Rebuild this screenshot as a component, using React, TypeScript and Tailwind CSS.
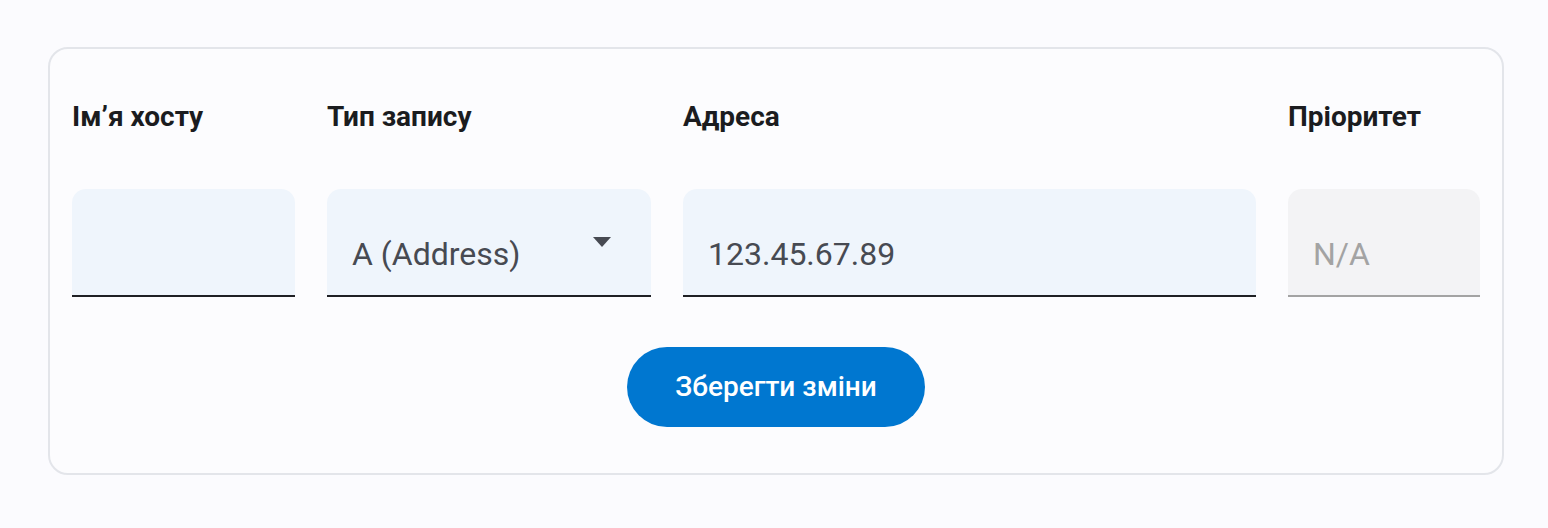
import React from "react";

const font = { fontFamily: "Roboto, 'Noto Sans', sans-serif" };

interface Field {
  label: string;
  width: string;
  value?: string;
  kind: "text" | "select" | "disabled";
}

const fields: Field[] = [
  { label: "Ім’я хосту", width: "w-[223px]", kind: "text" },
  { label: "Тип запису", width: "w-[324px]", value: "A (Address)", kind: "select" },
  { label: "Адреса", width: "w-[573px]", value: "123.45.67.89", kind: "text" },
  { label: "Пріоритет", width: "w-[192px]", value: "N/A", kind: "disabled" },
];

export default function App() {
  return (
    <div className="min-h-screen w-full bg-[#fbfbfe] px-12 pt-[47px]" style={font}>
      <div className="w-[1456px] rounded-[20px] border-2 border-[#e3e5ea] bg-[#fcfcfe] px-[22px] pt-[50px] pb-[46px]">
        <div className="flex gap-8">
          {fields.map((f) => (
            <div key={f.label} className={`flex flex-col ${f.width}`}>
              <label className="h-[36px] text-[28px] font-bold leading-[36px] text-[#1b1c1f]">
                {f.label}
              </label>
              <div
                className={`relative mt-[54px] flex h-[108px] items-center rounded-t-[14px] pl-[25px] pt-[24px] text-[32px] ${
                  f.kind === "disabled"
                    ? "border-b-2 border-[#a3a3a3] bg-[#f3f3f5] text-[#a3a3a3]"
                    : "border-b-2 border-[#1f2024] bg-[#eff5fc] text-[#474a52]"
                }`}
              >
                {f.value}
                {f.kind === "select" && (
                  <svg
                    className="absolute right-[40px] top-[48px]"
                    width="18"
                    height="10"
                    viewBox="0 0 18 10"
                  >
                    <path d="M0 0 L18 0 L9 10 Z" fill="#474a52" />
                  </svg>
                )}
              </div>
            </div>
          ))}
        </div>
        <div className="mt-[50px] flex justify-center">
          <button className="h-[80px] w-[298px] rounded-full bg-[#0077d0] text-[28px] font-medium text-white">
            Зберегти зміни
          </button>
        </div>
      </div>
    </div>
  );
}
